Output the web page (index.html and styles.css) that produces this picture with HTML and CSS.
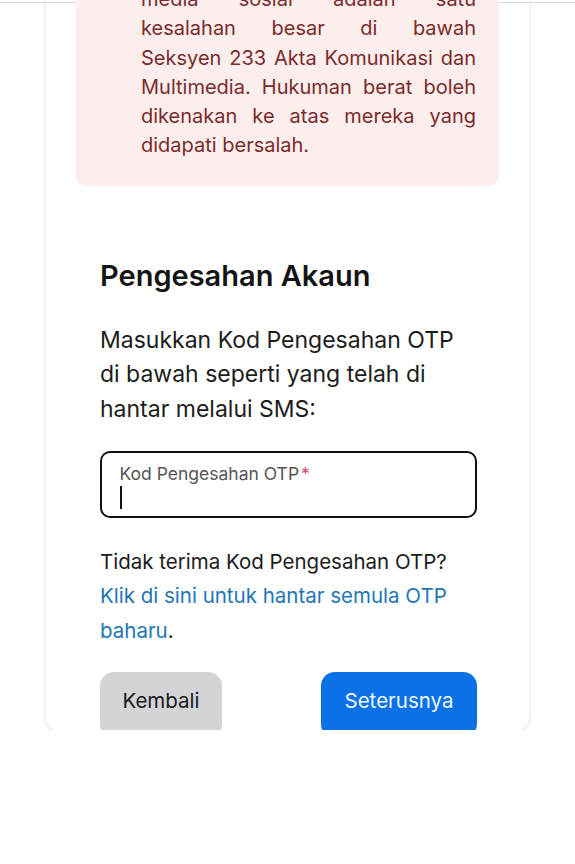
FILE: index.html
```html
<!DOCTYPE html>
<html>
<head>
  <title>Pengesahan Akaun</title>
  <link rel="stylesheet" href="styles.css">
</head>
<body>
  <div class="topline"></div>
  <div class="card">
    <div class="warning">
      <p>
        <span class="ln">media sosial adalah satu</span>
        <span class="ln">kesalahan besar di bawah</span>
        <span class="ln">Seksyen 233 Akta Komunikasi dan</span>
        <span class="ln">Multimedia. Hukuman berat boleh</span>
        <span class="ln">dikenakan ke atas mereka yang</span>
        didapati bersalah.
      </p>
    </div>

    <div class="content">
      <h2>Pengesahan Akaun</h2>
      <p class="intro">Masukkan Kod Pengesahan OTP di bawah seperti yang telah di hantar melalui SMS:</p>

      <div class="field">
        <label for="otp">Kod Pengesahan OTP<span class="req">*</span></label>
        <div class="caret"></div>
      </div>

      <p class="resend">Tidak terima Kod Pengesahan OTP?<br>
        <a href="#">Klik di sini untuk hantar semula OTP baharu</a>.</p>

      <div class="actions">
        <button class="btn btn-back">Kembali</button>
        <button class="btn btn-next">Seterusnya</button>
      </div>
    </div>
  </div>
</body>
</html>
```

FILE: styles.css
```css
body {
  font-family: Inter, "Noto Sans", sans-serif;
  background-color: #fff;
  margin: 0;
  color: #1c1c1c;
}

.topline {
  position: relative;
  z-index: 1;
  height: 2px;
  border-bottom: 1px solid #dadada;
}

.card {
  width: 483px;
  height: 769px;
  margin: -42px auto 0;
  background-color: #fff;
  border-radius: 0 0 12px 12px;
  box-shadow: 0 1px 4px rgba(0, 0, 0, 0.14);
  overflow: hidden;
  padding: 0 30px;
  box-sizing: border-box;
}

.warning {
  position: relative;
  z-index: 2;
  background-color: #fdeeee;
  border-radius: 0 0 10px 10px;
  padding: 24px 23px 25px 65px;
}

.warning p {
  margin: 0;
  font-size: 20px;
  line-height: 29.3px;
  text-align: justify;
  color: #7b2b2b;
}

/* each line justified edge to edge, like the original wrap */
.ln {
  display: block;
  text-align: justify;
  text-align-last: justify;
}

.content {
  padding: 0 22px 0 24px;
}

h2 {
  margin: 72px 0 0;
  font-size: 29px;
  font-weight: 600;
  line-height: 36px;
  color: #141414;
}

.intro {
  margin: 29px 0 0;
  font-size: 23px;
  line-height: 34.5px;
  color: #1c1c1c;
}

.field {
  margin-top: 25px;
  height: 53.5px;
  border: 2.5px solid #111;
  border-radius: 10px;
  padding: 9.5px 17.5px 0;
}

.field label {
  display: block;
  font-size: 17.5px;
  line-height: 22px;
  color: #555;
}

.req {
  color: #d6497a;
  margin-left: 2px;
}

.caret {
  width: 2px;
  height: 23px;
  margin-top: 1px;
  background-color: #111;
}

.resend {
  margin: 26.5px 0 0;
  font-size: 20.5px;
  line-height: 34.5px;
  color: #1c1c1c;
}

.resend a {
  color: #2376b4;
  text-decoration: none;
}

.actions {
  display: flex;
  justify-content: space-between;
  margin-top: 23.5px;
}

.btn {
  height: 66px;
  border: none;
  border-radius: 14px;
  font-family: Inter, "Noto Sans", sans-serif;
  font-size: 20.5px;
  padding: 0 0 8px;
}

.btn-back {
  width: 122px;
  background-color: #d3d3d8;
  color: #1a1a1a;
}

.btn-next {
  width: 156px;
  background-color: #0a72e6;
  color: #eef5ff;
}
```
